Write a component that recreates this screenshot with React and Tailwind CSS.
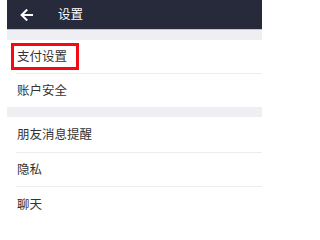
export default function App() {
  return (
    <div className="w-[262px] h-[210px] overflow-hidden bg-white pl-[7px] font-['Noto_Sans_CJK_SC',sans-serif]">
      <div className="h-[29px] bg-[#262a3a] flex items-center">
        <svg className="ml-[13px]" width="13" height="12" viewBox="0 0 13 12" fill="none">
          <path d="M12 6H2M6.5 1.2L1.6 6l4.9 4.8" stroke="#fff" strokeWidth="2" strokeLinecap="square" />
        </svg>
        <span className="ml-[25px] text-[12.5px] leading-none text-white">设置</span>
      </div>
      <div className="h-[1px] bg-[#c4c5cc]" />
      <div className="h-[10px] bg-[#efeff3]" />
      <div className="h-[33px] flex items-center pl-[4px]">
        <div className="w-[68px] h-[27px] border-[3px] border-[#f50a14] flex items-center pl-[3px]">
          <span className="text-[12.5px] leading-none text-[#333]">支付设置</span>
        </div>
      </div>
      <div className="ml-[9px] h-[1px] bg-[#ececec]" />
      <div className="h-[33px] flex items-center pl-[10px]">
        <span className="text-[12.5px] leading-none text-[#333]">账户安全</span>
      </div>
      <div className="h-[10px] bg-[#efeff3]" />
      <div className="h-[35px] flex items-center pl-[10px]">
        <span className="text-[12.5px] leading-none text-[#333]">朋友消息提醒</span>
      </div>
      <div className="ml-[9px] h-[1px] bg-[#ececec]" />
      <div className="h-[33px] flex items-center pl-[10px]">
        <span className="text-[12.5px] leading-none text-[#333]">隐私</span>
      </div>
      <div className="ml-[9px] h-[1px] bg-[#ececec]" />
      <div className="h-[34px] flex items-center pl-[10px]">
        <span className="text-[12.5px] leading-none text-[#333]">聊天</span>
      </div>
    </div>
  );
}
